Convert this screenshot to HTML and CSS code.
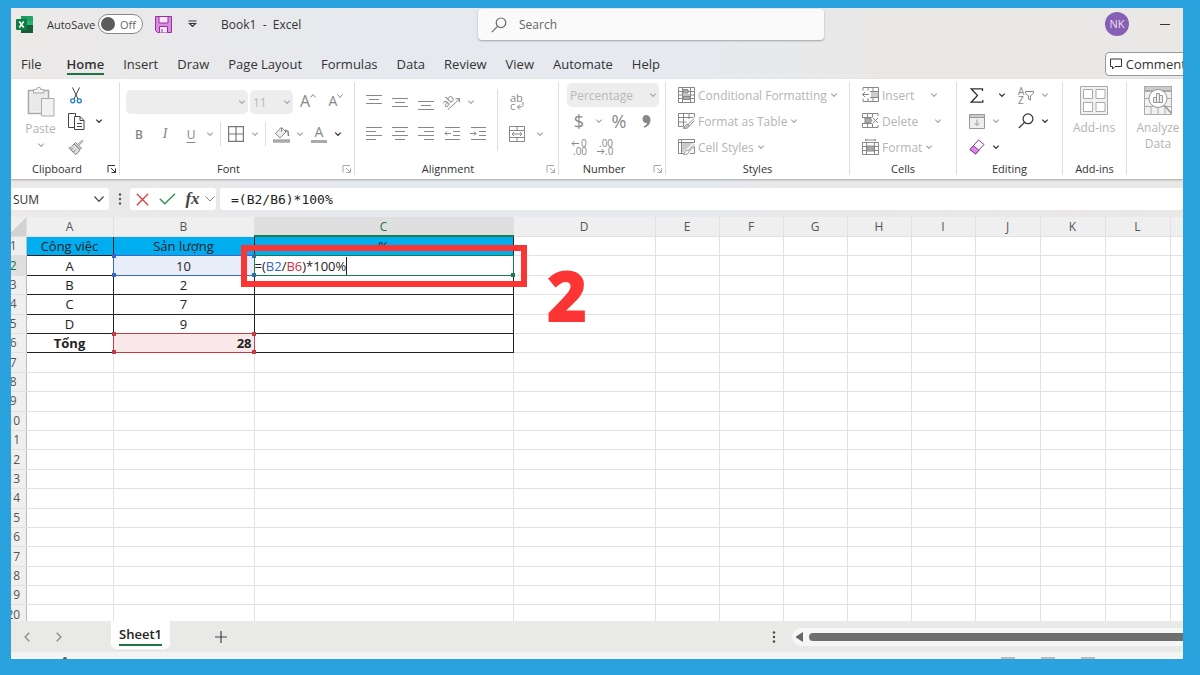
FILE: index.html
```
<!DOCTYPE html>
<html lang="vi">

<head>
    <meta charset="UTF-8">
    <title>Book1 - Excel</title>
    <link rel="stylesheet" href="styles.css">
</head>

<body>
    <svg class="defs" aria-hidden="true">
        <symbol id="chev" viewBox="0 0 8 8"><path d="M1.2 2.6 4 5.3 6.8 2.6" fill="none" stroke="currentColor" stroke-width="1.2" /></symbol>
        <symbol id="launch" viewBox="0 0 10 10"><path d="M1 8.500V1.500h7M4 4l4.500 4.500M8.500 4.500v4h-4" fill="none" stroke="currentColor" /></symbol>
    </svg>
    <div class="window">
        <!-- title bar -->
        <header class="titlebar">
            <div class="title-left">
                <svg class="logo" width="17" height="17" viewBox="0 0 17 17">
                    <path d="M5 0h11a1 1 0 0 1 1 1v15a1 1 0 0 1-1 1H5z" fill="#21a366" />
                    <path d="M5 0h6v5H5z" fill="#1c9a5c" />
                    <path d="M5 5h6v7H5z" fill="#107c41" />
                    <path d="M11 5h6v4h-6z" fill="#33c481" opacity=".5" />
                    <path d="M11 9h6v8h-6zM5 12h6v5H5z" fill="#185c37" />
                    <rect y="3" width="11" height="11" rx="1" fill="#107c41" />
                    <path d="m3.300 5.500 4.400 6M7.700 5.500l-4.400 6" stroke="#fff" stroke-width="1.600" />
                </svg>
                <span class="autosave">AutoSave</span>
                <button class="toggle" aria-label="AutoSave"><i></i>Off</button>
                <button class="icon save" aria-label="Save">
                    <svg width="17" height="17" viewBox="0 0 17 17" stroke="#96329f" fill="#d98be0">
                        <path d="M.5.5h16v16h-14l-2-2z" />
                        <path d="M4 .5h9v6.500H4z" fill="#f5e6f7" />
                        <path d="M4.500 16.500v-6h8v6" fill="#f5e6f7" />
                        <path d="M7 13v3.500" />
                    </svg>
                </button>
                <button class="icon qat" aria-label="Customize">
                    <svg width="9" height="8" viewBox="0 0 9 8" fill="none" stroke="#333"><path d="M.5 1h8M1.500 3.500l3 3 3-3z" stroke-width="1.200" /></svg>
                </button>
                <span class="doc">Book1&nbsp; -&nbsp; Excel</span>
            </div>
            <label class="search">
                <svg width="16" height="16" viewBox="0 0 16 16" fill="none" stroke="#666" stroke-width="1.200"><circle cx="10" cy="5.800" r="4.800" /><path d="M6.500 9.300.8 15.200" /></svg>
                <input type="text" placeholder="Search">
            </label>
            <div class="title-right">
                <span class="avatar">NK</span>
                <button class="minimize" aria-label="Minimize"></button>
            </div>
        </header>

        <nav class="tabs">
            <a href="#">File</a>
            <a href="#" class="active">Home</a>
            <a href="#">Insert</a>
            <a href="#">Draw</a>
            <a href="#">Page Layout</a>
            <a href="#">Formulas</a>
            <a href="#">Data</a>
            <a href="#">Review</a>
            <a href="#">View</a>
            <a href="#">Automate</a>
            <a href="#">Help</a>
            <button class="comments">
                <svg width="12" height="12" viewBox="0 0 12 12" fill="none" stroke="#333"><path d="M.5 1h11v7.500H5L2.500 11V8.500h-2z" /></svg>
                Comments
            </button>
        </nav>

        <!-- ribbon -->
        <div class="ribbon">
            <section class="group clipboard">
                <div class="body">
                    <button class="big paste">
                        <svg width="28" height="31" viewBox="0 0 28 31" fill="#f1f1f1" stroke="#aaa">
                            <path d="M1.500 4.500h20v23h-20z" stroke-width="1.600" />
                            <path d="M4 7h15v18H4z" fill="#e9e9e9" stroke="none" />
                            <path d="M6.500 7V3.500h3a2.200 2.200 0 0 1 4.400 0h3V7z" />
                            <path d="M14.500 12.500h12.500v17.500H14.500z" />
                        </svg>
                        Paste
                        <svg class="chev"><use href="#chev" /></svg>
                    </button>
                    <div class="three">
                        <div><button class="icon dark" aria-label="Cut">
                            <svg width="12" height="17" viewBox="0 0 12 17" fill="none" stroke="#444"><path d="M2.500.5 8 12M9.500.5 4 12" /><g stroke="#1f7fc4" stroke-width="1.300"><circle cx="2.700" cy="13.800" r="2" /><circle cx="9.300" cy="13.800" r="2" /></g></svg>
                        </button></div>
                        <div><button class="icon dark" aria-label="Copy">
                            <svg width="17" height="17" viewBox="0 0 17 17" fill="#fff" stroke="#444"><path d="M6.500 14.500h-6V.5h7v3" /><path d="M6.500 3.500h5.500l4 4v9H6.500z" /><path d="M12 3.500v4h4M9 10.500h5M9 13.500h5" fill="none" /></svg>
                        </button><svg class="chev dark"><use href="#chev" /></svg></div>
                        <div><button class="icon" aria-label="Format Painter">
                            <svg width="16" height="16" viewBox="0 0 16 16" fill="#ddd" stroke="#888"><path d="M14.500.8 10 5.300M15.500 1.800 11 6.200M6 5l6 5.500M7.500 3.500l6 5.500-1.500 1.500L6 5z" /><path d="M6 5C4.500 7.500 3 8.500.8 9l6.700 6.500c2-1 3.500-3 4.500-5zM3 10.500l2-1M5 13l2.500-2" /></svg>
                        </button></div>
                    </div>
                </div>
                <footer class="with-launch">Clipboard<svg class="launch dark"><use href="#launch" /></svg></footer>
            </section>

            <section class="group font">
                <div class="body two">
                    <div class="combos">
                        <span class="combo name"><select aria-label="Font" disabled><option></option></select><svg class="chev"><use href="#chev" /></svg></span>
                        <span class="combo size"><select aria-label="Font size" disabled><option>11</option></select><svg class="chev"><use href="#chev" /></svg></span>
                        <button class="icon grow" aria-label="Increase font size">A<svg width="6" height="4" viewBox="0 0 6 4" fill="none" stroke="#888"><path d="m.5 3.500 2.500-3 2.500 3" /></svg></button>
                        <button class="icon grow small" aria-label="Decrease font size">A<svg width="6" height="4" viewBox="0 0 6 4" fill="none" stroke="#888"><path d="m.5.5 2.500 3 2.500-3" /></svg></button>
                    </div>
                    <div>
                        <button class="icon bold">B</button>
                        <button class="icon italic">I</button>
                        <button class="icon underline">U</button>
                        <svg class="chev"><use href="#chev" /></svg>
                        <i class="sep"></i>
                        <button class="icon" aria-label="Borders"><svg width="16" height="16" viewBox="0 0 16 16" fill="none" stroke="#777" stroke-width="1.200"><path d="M.6.600h14.800v14.800H.6zM8 .6v14.800M.6 8h14.800" /></svg></button>
                        <svg class="chev"><use href="#chev" /></svg>
                        <i class="sep"></i>
                        <button class="icon" aria-label="Fill color"><svg width="17" height="17" viewBox="0 0 17 17" fill="none" stroke="#888"><path d="M8 1.500 2.500 7.500 7 12l6-6-4.500-4.500V6" fill="#eee" /><path d="M12 4l3 1.500.5 4.500" stroke-width="1.600" /><path d="M0 15h17" stroke="#aaa" stroke-width="3.500" /></svg></button>
                        <svg class="chev"><use href="#chev" /></svg>
                        <button class="icon fontcolor">A</button>
                        <svg class="chev dark"><use href="#chev" /></svg>
                    </div>
                </div>
                <footer class="with-launch">Font<svg class="launch"><use href="#launch" /></svg></footer>
            </section>

            <section class="group alignment">
                <div class="body">
                    <div class="two">
                        <div>
                            <button class="icon" aria-label="Top align"><svg width="16" height="17" viewBox="0 0 16 17" stroke="#888"><path d="M0 1.500h16M3 5.500h10M0 9.500h16" /></svg></button>
                            <button class="icon" aria-label="Middle align"><svg width="16" height="17" viewBox="0 0 16 17" stroke="#888"><path d="M0 4.500h16M3 8.500h10M0 12.500h16" /></svg></button>
                            <button class="icon" aria-label="Bottom align"><svg width="16" height="17" viewBox="0 0 16 17" stroke="#888"><path d="M0 7.500h16M3 11.500h10M0 15.500h16" /></svg></button>
                            <button class="icon" aria-label="Orientation"><svg width="18" height="17" viewBox="0 0 18 17" fill="none" stroke="#888"><path d="M5 15.500 16.500 5M12.500 4.800l4-.3-.2 4" /><text x="0" y="11" font-size="11" fill="#888" stroke="none" transform="rotate(-45 5 9)">ab</text></svg></button>
                            <svg class="chev"><use href="#chev" /></svg>
                        </div>
                        <div>
                            <button class="icon" aria-label="Align left"><svg width="16" height="16" viewBox="0 0 16 16" stroke="#888"><path d="M0 1.500h16M0 5.500h10M0 9.500h16M0 13.500h10" /></svg></button>
                            <button class="icon" aria-label="Center"><svg width="16" height="16" viewBox="0 0 16 16" stroke="#888"><path d="M0 1.500h16M3 5.500h10M0 9.500h16M3 13.500h10" /></svg></button>
                            <button class="icon" aria-label="Align right"><svg width="16" height="16" viewBox="0 0 16 16" stroke="#888"><path d="M0 1.500h16M6 5.500h10M0 9.500h16M6 13.500h10" /></svg></button>
                            <button class="icon" aria-label="Decrease indent"><svg width="16" height="16" viewBox="0 0 16 16" fill="none" stroke="#888"><path d="M1 1.500h15M9 5.500h7M9 9.500h7M1 13.500h15M7 7.500H1M3 5.500l-2 2 2 2" /></svg></button>
                            <button class="icon" aria-label="Increase indent"><svg width="16" height="16" viewBox="0 0 16 16" fill="none" stroke="#888"><path d="M1 1.500h15M9 5.500h7M9 9.500h7M1 13.500h15M0 7.500h6M4 5.500l2 2-2 2" /></svg></button>
                        </div>
                    </div>
                    <i class="sep tall"></i>
                    <div class="two">
                        <div><button class="icon" aria-label="Wrap text"><svg width="16" height="18" viewBox="0 0 16 18" fill="none" stroke="#888"><text x="1" y="9" font-size="11" fill="#888" stroke="none">ab</text><text x="1" y="17" font-size="11" fill="#888" stroke="none">c</text><path d="M14 9v2.500c0 1.500-1 2.500-3 2.500H8.500M11 11.500 8.500 14l2.500 2.500" /></svg></button></div>
                        <div class="merge"><button class="icon" aria-label="Merge and center"><svg width="16" height="16" viewBox="0 0 16 16" fill="none" stroke="#888"><path d="M.5.5h15v15H.5zM.5 4.500h15M.5 11.500h15M8 .5v4M8 11.500v4M3 8h10M5 6 3 8l2 2M11 6l2 2-2 2" /></svg></button><svg class="chev"><use href="#chev" /></svg></div>
                    </div>
                </div>
                <footer class="with-launch">Alignment<svg class="launch"><use href="#launch" /></svg></footer>
            </section>

            <section class="group number">
                <div class="body three">
                    <div><span class="combo format"><select aria-label="Number format" disabled><option>Percentage</option></select><svg class="chev"><use href="#chev" /></svg></span></div>
                    <div class="signs">
                        <button class="icon">$</button>
                        <svg class="chev"><use href="#chev" /></svg>
                        <button class="icon">%</button>
                        <button class="icon" aria-label="Comma style"><svg width="9" height="13" viewBox="0 0 9 13" fill="#888"><path d="M4 0c2.500 0 4.500 1.700 4.500 4.700 0 4-2.500 7-6.500 8l-.5-1.200c2.200-.8 3.300-2 3.500-3.500C2.500 8.500.5 6.500.5 4 .5 1.700 2 0 4 0z" /></svg></button>
                    </div>
                    <div class="decimals">
                        <button class="icon" aria-label="Increase decimal"><svg width="17" height="17" viewBox="0 0 17 17" fill="none" stroke="#888"><path d="M1 4.500h7M3.500 2 1 4.500 3.500 7" /><text x="10" y="8" font-size="10" fill="#888" stroke="none">0</text><text x="2" y="16" font-size="10" fill="#888" stroke="none">.00</text></svg></button>
                        <button class="icon" aria-label="Decrease decimal"><svg width="17" height="17" viewBox="0 0 17 17" fill="none" stroke="#888"><path d="M0 12.500h7M4.500 10 7 12.500 4.500 15" /><text x="2" y="8" font-size="10" fill="#888" stroke="none">.00</text><text x="8" y="16" font-size="10" fill="#888" stroke="none">.0</text></svg></button>
                    </div>
                </div>
                <footer class="with-launch">Number<svg class="launch"><use href="#launch" /></svg></footer>
            </section>

            <section class="group styles">
                <div class="body three">
                    <button class="cmd"><svg width="17" height="16" viewBox="0 0 17 16" fill="none" stroke="#888"><path d="M.5.5h16v15H.5zM.5 4.500h16M.5 8h16M.5 11.500h16M4.500.5v15M12.500.5v15" /><path d="M5 2.500h5v3.500H5zM5 9.500h7v3H5z" fill="#aaa" /></svg>Conditional Formatting<svg class="chev"><use href="#chev" /></svg></button>
                    <button class="cmd"><svg width="17" height="16" viewBox="0 0 17 16" fill="none" stroke="#888"><path d="M16.500 4V.5H.5v13H5M.5 4.500h15M.5 9h8M5.500.5v13M11 .5V6" /><path d="M16 5.500 9.500 12M16.500 7.500 11 13.500M9.500 11c-2 0-2 3-4.500 4 3 1 6 0 6-2.500z" fill="#ccc" /></svg>Format as Table<svg class="chev"><use href="#chev" /></svg></button>
                    <button class="cmd"><svg width="17" height="16" viewBox="0 0 17 16" fill="none" stroke="#888"><path d="M16.500 4V.5H.5v14H5M.5 3.500h16M3.500.5v14" /><path d="M4 4h11L5 13.500H4z" fill="#ccc" stroke="none" /><path d="M16 5.500 9.500 12M16.500 7.500v7H12M9.500 11c-2 0-2 3-4.500 4 3 1 6 0 6-2.500l5-5" /></svg>Cell Styles<svg class="chev"><use href="#chev" /></svg></button>
                </div>
                <footer>Styles</footer>
            </section>

            <section class="group cells">
                <div class="body three">
                    <button class="cmd wide"><svg width="17" height="16" viewBox="0 0 17 16" fill="none" stroke="#888"><path d="M1 3.500v-3h15.500v14H1v-3M6 .5v3M11 .5v14M6 11v3.500M8 4.500h8.500M8 10.500h8.500M7 7.500H0M3 5 .5 7.500 3 10" /><path d="M9 5h7v5H9z" fill="#ccc" stroke="none" /></svg>Insert<svg class="chev"><use href="#chev" /></svg></button>
                    <button class="cmd wide"><svg width="17" height="16" viewBox="0 0 17 16" fill="none" stroke="#888"><path d="M.5 4V.5H16V3M.5 11v3.500H16V12M5.500.5v4M10.500.5v4M5.500 10.500v4M10.500 10.500v4M0 4.500h10M0 10.500h10M11 5l5 5M16 5l-5 5" /><path d="M3 5h5l2 2.500L8 10H3z" fill="#aaa" /></svg>Delete<svg class="chev"><use href="#chev" /></svg></button>
                    <button class="cmd"><svg width="17" height="16" viewBox="0 0 17 16" fill="none" stroke="#888"><path d="M.5 3.500h16v12H.5zM4.500 3.500v12M12.500 3.500v12M.5 7.500h16M.5 11.500h16M3 1h11M4 0v2M13 0v2" /><path d="M5 7h7v5H5z" fill="#aaa" /></svg>Format<svg class="chev"><use href="#chev" /></svg></button>
                </div>
                <footer>Cells</footer>
            </section>

            <section class="group editing">
                <div class="body">
                    <div class="three">
                        <div class="sum"><button class="icon" aria-label="AutoSum"><svg width="14" height="15" viewBox="0 0 14 15" fill="none" stroke="#333" stroke-width="1.300"><path d="M12.500 3V.8H1.200L7.500 7.500l-6.300 6.700h11.600V12" /></svg></button><svg class="chev dark"><use href="#chev" /></svg></div>
                        <div><button class="icon" aria-label="Fill"><svg width="16" height="15" viewBox="0 0 16 15" fill="#eee" stroke="#999"><path d="M.5.500h15v14H.5z" /><path d="M.5.500h15v3H.5z" fill="#ccc" /><path d="M8 5.500v6M5.500 9 8 11.500 10.500 9" fill="none" /></svg></button><svg class="chev"><use href="#chev" /></svg></div>
                        <div><button class="icon" aria-label="Clear"><svg width="16" height="16" viewBox="0 0 16 16" fill="#fff" stroke="#8d3a97"><path d="M9.500 1 15 5.500 6.500 15 1 10.500z" /><path d="M4.500 6.800 10 11.300 6.500 15 1 10.500z" fill="#d98be0" /></svg></button><svg class="chev dark"><use href="#chev" /></svg></div>
                    </div>
                    <div class="three">
                        <div><button class="icon" aria-label="Sort and filter"><svg width="18" height="17" viewBox="0 0 18 17" fill="none" stroke="#888"><text x="1" y="8" font-size="10" fill="#888" stroke="none">A</text><text x="1" y="17" font-size="10" fill="#888" stroke="none">Z</text><path d="M8.500 4.500h8v1.500L13.500 9v4l-2-1V9L8.500 6z" /></svg></button><svg class="chev"><use href="#chev" /></svg></div>
                        <div><button class="icon" aria-label="Find and select"><svg width="16" height="16" viewBox="0 0 16 16" fill="none" stroke="#333" stroke-width="1.200"><circle cx="10" cy="5.800" r="4.900" /><path d="M6.500 9.300.8 15" /></svg></button><svg class="chev dark"><use href="#chev" /></svg></div>
                    </div>
                </div>
                <footer>Editing</footer>
            </section>

            <section class="group addins">
                <div class="body">
                    <button class="big">
                        <svg width="28" height="29" viewBox="0 0 28 29" fill="#fff" stroke="#aaa"><path d="M.5.500h27v28H.5z" fill="#f1f1f1" /><path d="M3.500 3.500h9v9h-9zM16 3.500h9v9h-9zM3.500 16.500h9v9h-9zM16 16.500h9v9h-9z" /></svg>
                        Add-ins
                    </button>
                </div>
                <footer>Add-ins</footer>
            </section>

            <section class="group analyze">
                <div class="body">
                    <button class="big">
                        <svg width="28" height="29" viewBox="0 0 28 29" fill="#f1f1f1" stroke="#aaa"><path d="M.5.500h27v28H.5zM.5 5.500h27M.5 12.500h27M.5 20.500h27M7 20.500v8M14 20.500v8M21 20.500v8" /><path d="M.5.500h27v4H.5z" fill="#ccc" /><circle cx="14" cy="12.500" r="9" fill="#fff" stroke="#999" /><path d="m20.500 19.500 7 8" stroke="#999" stroke-width="1.600" /><path d="M9.500 11.500h3v5h-3zM12.500 7.500h3v9h-3zM15.500 9.500h3v7h-3z" stroke="#999" fill="#eee" /></svg>
                        <span>Analyze<br>Data</span>
                    </button>
                </div>
            </section>
        </div>

        <!-- formula bar -->
        <div class="formulabar">
            <label class="namebox"><input type="text" value="SUM" aria-label="Name box"><svg width="10" height="10" viewBox="0 0 10 10" fill="none" stroke="#444"><path d="m.5 2.500 4.500 4.800 4.500-4.800" stroke-width="1.200" /></svg></label>
            <svg class="dots" width="4" height="12" viewBox="0 0 4 12" fill="#555"><circle cx="2" cy="1.500" r="1.200" /><circle cx="2" cy="6" r="1.200" /><circle cx="2" cy="10.500" r="1.200" /></svg>
            <div class="fxbox">
                <button class="icon" aria-label="Cancel"><svg width="13" height="13" viewBox="0 0 13 13" stroke="#e0383e" stroke-width="1.300"><path d="m.8.8 11.400 11.400M12.200.8.8 12.200" /></svg></button>
                <button class="icon" aria-label="Enter"><svg width="17" height="12" viewBox="0 0 17 12" fill="none" stroke="#2e9455" stroke-width="1.400"><path d="m.8 5.800 5 5L16 .8" /></svg></button>
                <button class="icon fx">fx</button>
                <svg width="10" height="10" viewBox="0 0 10 10" fill="none" stroke="#888"><path d="m.5 2.500 4.500 4.500 4.500-4.500" /></svg>
            </div>
            <input class="formula" type="text" value="=(B2/B6)*100%" aria-label="Formula">
        </div>

        <!-- sheet -->
        <main class="sheet">
            <table>
                <colgroup>
                    <col class="c-row">
                    <col class="c-a">
                    <col class="c-b">
                    <col class="c-c">
                    <col class="c-d">
                    <col span="5" class="c-mid">
                    <col span="4" class="c-end">
                </colgroup>
                <thead>
                    <tr>
                        <th class="corner"></th>
                        <th>A</th>
                        <th>B</th>
                        <th class="current">C</th>
                        <th>D</th>
                        <th>E</th>
                        <th>F</th>
                        <th>G</th>
                        <th>H</th>
                        <th>I</th>
                        <th>J</th>
                        <th>K</th>
                        <th>L</th>
                        <th></th>
                    </tr>
                </thead>
                <tbody id="rows">
                    <tr>
                        <th>1</th>
                        <td class="data head">Công việc</td>
                        <td class="data head">Sản lượng</td>
                        <td class="data head top">%</td>
                    </tr>
                    <tr>
                        <th class="current">2</th>
                        <td class="data">A</td>
                        <td class="data ref blue">10<i class="box"></i></td>
                        <td class="data edit">
                            <span class="typing">=(<span class="b2">B2</span>/<span class="b6">B6</span>)*100%</span>
                            <i class="box"></i>
                            <i class="frame"></i>
                            <b class="step">2</b>
                        </td>
                    </tr>
                    <tr>
                        <th>3</th>
                        <td class="data">B</td>
                        <td class="data">2</td>
                        <td class="data"></td>
                    </tr>
                    <tr>
                        <th>4</th>
                        <td class="data">C</td>
                        <td class="data">7</td>
                        <td class="data"></td>
                    </tr>
                    <tr>
                        <th>5</th>
                        <td class="data">D</td>
                        <td class="data">9</td>
                        <td class="data"></td>
                    </tr>
                    <tr>
                        <th>6</th>
                        <td class="data total">Tổng</td>
                        <td class="data total ref red">28<i class="box"></i></td>
                        <td class="data"></td>
                    </tr>
                </tbody>
            </table>
        </main>

        <!-- sheet tabs -->
        <div class="sheettabs">
            <button class="nav" aria-label="Previous sheet"><svg width="6" height="10" viewBox="0 0 6 10" fill="none" stroke="#888" stroke-width="1.200"><path d="M5.300.8 1 5l4.300 4.200" /></svg></button>
            <button class="nav" aria-label="Next sheet"><svg width="6" height="10" viewBox="0 0 6 10" fill="none" stroke="#888" stroke-width="1.200"><path d="M.7.8 5 5 .7 9.200" /></svg></button>
            <button class="sheettab"><span>Sheet1</span></button>
            <button class="nav add" aria-label="New sheet"><svg width="12" height="12" viewBox="0 0 12 12" stroke="#444" stroke-width="1.200"><path d="M6 0v12M0 6h12" /></svg></button>
            <svg class="dots" width="4" height="12" viewBox="0 0 4 12" fill="#444"><circle cx="2" cy="1.500" r="1.200" /><circle cx="2" cy="6" r="1.200" /><circle cx="2" cy="10.500" r="1.200" /></svg>
            <div class="scroll">
                <svg width="7" height="10" viewBox="0 0 7 10" fill="#666"><path d="M7 0v10L0 5.500v-1z" /></svg>
                <i></i>
            </div>
        </div>
        <div class="status">
            <i class="person"></i>
            <i class="view"></i>
            <i class="view"></i>
            <i class="view"></i>
        </div>
    </div>
    <script src="script.js"></script>
</body>

</html>
```
FILE: styles.css
```
* {
    box-sizing: border-box;
}

body {
    margin: 0;
    height: 100vh;
    padding: 8px 17px 16px 11px;
    background-color: #2aa2de;
    font-family: "Open Sans", "Noto Sans", sans-serif;
    font-size: 12px;
    color: #333;
}

button,
input,
select {
    font: inherit;
    color: inherit;
    border: none;
    background: none;
    padding: 0;
    margin: 0;
    outline: none;
}

svg {
    flex: none;
    overflow: visible;
}

.defs {
    position: absolute;
    width: 0;
    height: 0;
}

.window {
    height: 100%;
    display: flex;
    flex-direction: column;
    overflow: hidden;
    background: linear-gradient(90deg, #ece9e8 0, #e6e9ee 30%, #e6e9ed 60%, #eae8e6 76%);
}

/* title bar */
.titlebar {
    display: flex;
    height: 41px;
    flex: none;
    align-items: flex-start;
}

.title-left {
    width: 467px;
    height: 32px;
    display: flex;
    align-items: center;
    padding-left: 5px;
}

.autosave {
    font-size: 11px;
    margin: 0 3px 0 14px;
}

.toggle {
    width: 45px;
    height: 20px;
    border: 1px solid #888;
    border-radius: 10px;
    background-color: #fff;
    display: flex;
    align-items: center;
    gap: 5px;
    padding-left: 2px;
    font-size: 11px;
    color: #666;
}

.toggle i {
    width: 14px;
    height: 14px;
    border-radius: 50%;
    background-color: #5c5c5c;
}

.save {
    margin-left: 7px;
}

.qat {
    margin-left: 3px;
}

.doc {
    margin-left: 16px;
}

.search {
    width: 346px;
    height: 31px;
    margin-top: 1px;
    display: flex;
    align-items: center;
    gap: 12px;
    padding-left: 13px;
    background-color: #fafafa;
    border-radius: 4px;
    box-shadow: 0 1px 2px rgba(0, 0, 0, .3);
}

.search input {
    flex: 1;
    font-size: 12px;
}

.search input::placeholder {
    color: #666;
    opacity: 1;
}

.title-right {
    margin-left: auto;
    height: 32px;
    display: flex;
    align-items: center;
    gap: 31px;
    padding-right: 13px;
}

.avatar {
    width: 24px;
    height: 24px;
    line-height: 24px;
    border-radius: 50%;
    background-color: #8660b4;
    color: #eadff5;
    font-size: 11px;
    text-align: center;
}

.minimize {
    width: 10px;
    height: 1px;
    background-color: #333;
}

/* menu tabs */
.tabs {
    display: flex;
    height: 30px;
    flex: none;
    align-items: center;
    gap: 19px;
    padding-left: 10px;
    font-size: 13px;
}

.tabs a {
    color: #333;
    text-decoration: none;
    height: 22px;
    line-height: 22px;
    white-space: nowrap;
}

.tabs a.active {
    margin-left: 6px;
    font-weight: 600;
    border-bottom: 2px solid #217346;
}

.comments {
    margin-left: auto;
    margin-right: -16px;
    height: 24px;
    display: flex;
    align-items: center;
    gap: 4px;
    padding: 0 6px 0 4px;
    background-color: #fff;
    border: 1px solid #999;
    border-radius: 4px;
}

/* ribbon */
.ribbon {
    display: flex;
    flex: none;
    height: 100px;
    padding-top: 3px;
    background-color: #fff;
    box-shadow: 0 1px 2px rgba(0, 0, 0, .3);
    color: #b4b4b4;
}

.group {
    flex: none;
    height: 93px;
    border-right: 1px solid #ddd;
    padding-left: 7px;
}

.group .body {
    height: 78px;
    display: flex;
}

.group footer {
    position: relative;
    height: 15px;
    line-height: 17px;
    font-size: 11px;
    color: #333;
    text-align: center;
    margin-left: -7px;
}

.group .with-launch {
    padding-right: 16px;
}

.launch {
    position: absolute;
    right: 2px;
    bottom: 1px;
    width: 10px;
    height: 10px;
    color: #aaa;
}

.chev {
    width: 8px;
    height: 8px;
    margin: 0 2px;
    color: #aaa;
}

.dark {
    color: #333;
}

.icon {
    width: 26px;
    height: 24px;
    display: flex;
    align-items: center;
    justify-content: center;
    color: #888;
}

.sep {
    width: 1px;
    height: 24px;
    margin: 0 2px 0 4px;
    background-color: #ddd;
}

.sep.tall {
    height: 62px;
    margin: 7px 6px 0;
}

.group .three,
.group .two {
    display: flex;
    flex-direction: column;
}

.three > * {
    height: 26px;
    display: flex;
    align-items: center;
}

.group .two {
    padding-top: 8px;
    gap: 8px;
}

.two > div {
    height: 24px;
    display: flex;
    align-items: center;
}

.big {
    display: flex;
    flex-direction: column;
    align-items: center;
    padding-top: 4px;
    line-height: 16px;
}

.combo {
    position: relative;
    display: flex;
}

.combo select {
    appearance: none;
    width: 100%;
    height: 24px;
    padding-left: 3px;
    border-radius: 5px;
    background-color: #ededed;
    color: #b8b8b8;
    opacity: 1;
}

.combo .chev {
    position: absolute;
    right: 0;
    top: 8px;
}

.clipboard {
    width: 109px;
}

.paste {
    width: 45px;
    gap: 4px;
}

.clipboard .three .chev {
    margin-left: 6px;
}

.font {
    width: 235px;
    padding-left: 6px;
}

.combos {
    gap: 2px;
}

.combo.name {
    width: 122px;
}

.combo.size {
    width: 43px;
}

.grow {
    font-size: 16px;
    align-items: flex-start;
    line-height: 22px;
}

.grow svg {
    margin-top: 4px;
}

.grow.small {
    font-size: 14px;
}

.bold {
    font-weight: 600;
}

.italic {
    font-family: "Liberation Serif", serif;
    font-style: italic;
    font-size: 14px;
}

.underline {
    text-decoration: underline;
    text-underline-offset: 3px;
}

.fontcolor {
    height: 17px;
    width: 16px;
    margin: 0 5px 0 5px;
    font-size: 14px;
    line-height: 12px;
    padding-bottom: 2px;
    border-bottom: 3px solid #aaa;
}

.alignment {
    width: 204px;
    padding-left: 6px;
}

.merge .chev {
    margin-left: 6px;
}

.number {
    width: 107px;
}

.combo.format {
    width: 92px;
    margin-left: 1px;
}

.signs {
    gap: 1px;
}

.signs .icon {
    font-size: 18px;
}

.styles {
    width: 184px;
    padding-left: 12px;
}

.cells {
    width: 107px;
    padding-left: 12px;
}

.styles footer,
.cells footer {
    margin-left: -12px;
}

.cmd {
    gap: 3px;
    white-space: nowrap;
}

.cmd .chev {
    margin: 0;
}

.cmd.wide .chev {
    margin-left: 13px;
}

.editing {
    width: 106px;
}

.editing .three {
    width: 50px;
}

.sum .chev {
    margin-left: 8px;
}

.addins {
    width: 64px;
    padding-left: 0;
}

.addins .big,
.analyze .big {
    width: 62px;
    gap: 5px;
}

.addins footer {
    margin-left: 0;
}

.analyze {
    padding-left: 0;
    border-right: none;
}

/* formula bar */
.formulabar {
    display: flex;
    flex: none;
    height: 38px;
    padding-top: 9px;
    align-items: flex-start;
}

.namebox,
.fxbox,
.formula {
    height: 22px;
    background-color: #fff;
    border-radius: 3px;
}

.namebox {
    width: 98px;
    display: flex;
    align-items: center;
    padding: 0 5px 0 2px;
}

.namebox input {
    width: 80px;
    margin-right: auto;
}

.formulabar .dots {
    margin: 5px 8px 0 9px;
}

.fxbox {
    width: 86px;
    display: flex;
    align-items: center;
    margin-right: 4px;
}

.fxbox .icon {
    width: 25px;
}

.fx {
    font-family: "Liberation Serif", serif;
    font-style: italic;
    font-weight: bold;
    font-size: 17px;
    color: #444;
}

.formula {
    flex: 1;
    padding-left: 11px;
    font-family: "DejaVu Sans Mono", monospace;
    font-size: 13px;
    color: #222;
}

/* sheet */
.sheet {
    flex: 1;
    min-height: 0;
    overflow: hidden;
    background-color: #fff;
}

.sheet table {
    table-layout: fixed;
    width: 1237px;
    height: 408px;
    margin-left: -13px;
    border-collapse: collapse;
}

.c-row {
    width: 28px;
}

.c-a {
    width: 87px;
}

.c-b {
    width: 141px;
}

.c-c {
    width: 259px;
}

.c-d {
    width: 142px;
}

.c-mid {
    width: 64px;
}

.c-end {
    width: 65px;
}

.sheet th,
.sheet td {
    padding: 0;
    line-height: 16px;
    white-space: nowrap;
}

.sheet th {
    font-weight: normal;
    color: #555;
    background-color: #efefef;
    border-right: 1px solid #e0e0e0;
    border-bottom: 1px solid #e0e0e0;
}

.sheet thead th {
    height: 19px;
    padding-top: 2px;
}

.sheet tbody th {
    padding-left: 3px;
    border-right-color: #bbb;
}

.sheet th.current {
    background-color: #dfdfdf;
    color: #217346;
}

.sheet .corner {
    background: linear-gradient(135deg, #efefef 60%, #d2d2d2 60%);
}

.sheet td {
    border: 1px solid #e1e1e1;
}

.sheet td.data {
    position: relative;
    border-color: #222;
    font-size: 13px;
    color: #222;
    text-align: center;
}

.sheet td.head {
    background-color: #00adef;
}

.sheet td.top {
    border-top: 2px solid #1b7f4b;
}

.sheet td.total {
    font-weight: bold;
}

.sheet td.blue {
    background-color: #e8eef9;
}

.sheet td.red {
    background-color: #f9e8e9;
    text-align: right;
    padding-right: 2px;
}

.sheet td.edit {
    text-align: left;
}

.typing {
    border-right: 1px solid #222;
}

.b2 {
    color: #3a66c4;
}

.b6 {
    color: #cc3340;
}

.box {
    position: absolute;
    inset: -1px;
    border: 1px solid #1b7f4b;
}

/* corner handles of the referenced cells */
.ref .box {
    border-color: #3a66c4;
}

.ref .box::before,
.ref .box::after {
    content: "";
    position: absolute;
    left: -2px;
    right: -2px;
    height: 4px;
    border: solid #3a66c4;
    border-width: 0 4px;
}

.box::before {
    top: -2px;
}

.box::after {
    bottom: -2px;
}

.red .box,
.red .box::before,
.red .box::after {
    border-color: #c43b48;
}

.edit .box::after {
    content: "";
    position: absolute;
    right: -2px;
    width: 4px;
    height: 4px;
    background-color: #1b7f4b;
}

.frame {
    position: absolute;
    top: -11px;
    right: -14px;
    bottom: -12px;
    left: -14px;
    border: 6px solid #fb3434;
    z-index: 1;
}

.step {
    position: absolute;
    left: 292px;
    top: 4px;
    font-size: 70px;
    line-height: 70px;
    font-weight: 800;
    color: #fb3434;
    z-index: 1;
}

/* sheet tabs */
.sheettabs {
    display: flex;
    flex: none;
    height: 31px;
    align-items: center;
    background-color: #e9e9e8;
}

.nav {
    width: 32px;
    height: 24px;
    display: flex;
    align-items: center;
    justify-content: center;
}

.sheettab {
    align-self: flex-start;
    height: 28px;
    margin-left: 36px;
    padding: 0 8px;
    background-color: #fff;
    border-radius: 0 0 5px 5px;
    font-size: 13px;
    font-weight: 600;
    color: #222;
}

.sheettab span {
    display: block;
    line-height: 19px;
    border-bottom: 2px solid #217346;
}

.add {
    margin-left: 35px;
}

.sheettabs .dots {
    margin-left: auto;
}

.scroll {
    width: 391px;
    height: 18px;
    margin-left: 16px;
    display: flex;
    align-items: center;
    gap: 6px;
    padding-left: 4px;
    background-color: #f6f6f6;
    border-radius: 9px 0 0 9px;
}

.scroll i {
    flex: 1;
    height: 8px;
    background-color: #6e6e6e;
    border-radius: 4px 0 0 4px;
}

.status {
    display: flex;
    flex: none;
    height: 7px;
    align-items: flex-end;
    gap: 26px;
    padding-right: 88px;
    background-color: #f4f4f4;
}

.person {
    width: 4px;
    height: 2px;
    margin-left: 52px;
    margin-right: auto;
    border-radius: 2px 2px 0 0;
    background-color: #555;
}

.view {
    width: 14px;
    height: 2px;
    background-color: #bbb;
}
```
FILE: script.js
```
var rows = document.getElementById('rows'),
    rowCount = 20,
    cellCount = 14;
//thêm các hàng còn lại
for (var i = rows.children.length + 1; i <= rowCount; i++) {
    var tr = document.createElement('tr'),
        th = document.createElement('th');
    th.innerText = i;
    tr.appendChild(th);
    rows.appendChild(tr);
}
//thêm ô trống cho đủ cột
for (var j = 0; j < rows.children.length; j++) {
    while (rows.children[j].children.length < cellCount) {
        rows.children[j].appendChild(document.createElement('td'));
    }
}
```
